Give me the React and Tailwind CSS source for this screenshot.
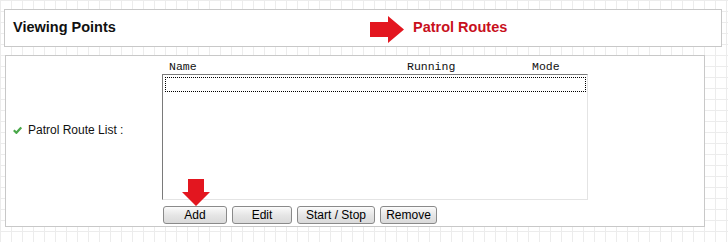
export default function App() {
  const btn =
    "h-[18px] rounded-[3px] border border-[#8a8a8a] bg-[linear-gradient(to_bottom,#fbfbfb,#e6e6e6_50%,#dadada)] text-[12px] leading-none text-black font-['Liberation_Sans',Arial,sans-serif]";
  return (
    <div className="relative w-[728px] h-[242px] overflow-hidden bg-white bg-[linear-gradient(to_right,#ececec_1px,transparent_1px),linear-gradient(to_bottom,#ececec_1px,transparent_1px)] bg-[size:11px_11px] font-['Liberation_Sans',Arial,sans-serif] pt-[9px]">
      {/* Top panel */}
      <div className="ml-[4px] w-[718px] h-[38px] border border-[#c8c8c8] bg-white flex items-center">
        <div className="pl-[8px] w-[367px] text-[14.5px] font-bold text-[#111]">Viewing Points</div>
        <div className="text-[14.5px] font-bold text-[#c8101c] ml-[41px]">Patrol Routes</div>
      </div>
      {/* Right arrow */}
      <svg className="absolute left-[370px] top-[16px]" width="35" height="28" viewBox="0 0 35 28">
        <polygon points="0,6 18,6 18,0 34,13.5 18,27 18,21 0,21" fill="#e3161f" />
      </svg>

      {/* Bottom panel */}
      <div className="mt-[8px] ml-[5px] w-[700px] h-[172px] border border-[#c8c8c8] bg-white pt-[4px]">
        <div className="flex items-center">
          <div className="w-[156px] flex items-center pl-[7px] gap-[6px] text-[12px] text-[#111]">
            <svg width="9" height="8" viewBox="0 0 9 8">
              <path d="M0.8 4.2 L3.4 6.8 L8.2 1.4" stroke="#4aa84a" strokeWidth="2.2" fill="none" />
            </svg>
            <span>Patrol Route List :</span>
          </div>
          <div className="flex flex-col">
            <div className="relative h-[14px] text-[11.5px] leading-[14px] text-[#111] font-['Liberation_Mono','Courier_New',monospace]">
              <span className="absolute left-[7px] top-0">Name</span>
              <span className="absolute left-[245px] top-0">Running</span>
              <span className="absolute left-[370px] top-0">Mode</span>
            </div>
            <div className="w-[426px] h-[126px] border-t border-l border-t-[#7a7a7a] border-l-[#7a7a7a] border-r border-b border-r-[#e4e4e4] border-b-[#e4e4e4] pt-[2px] pl-[2px]">
              <div className="w-[421px] h-[15px] border border-dotted border-black" />
            </div>
          </div>
        </div>
        <div className="flex gap-[5px] ml-[157px] mt-[6px]">
          <button className={btn + " w-[64px]"}>Add</button>
          <button className={btn + " w-[60px]"}>Edit</button>
          <button className={btn + " w-[78px]"}>Start / Stop</button>
          <button className={btn + " w-[57px]"}>Remove</button>
        </div>
      </div>
      {/* Down arrow */}
      <svg className="absolute left-[182px] top-[179px]" width="28" height="27" viewBox="0 0 28 27">
        <polygon points="6,0 22,0 22,13 28,13 14,27 0,13 6,13" fill="#e3161f" />
      </svg>
    </div>
  );
}
